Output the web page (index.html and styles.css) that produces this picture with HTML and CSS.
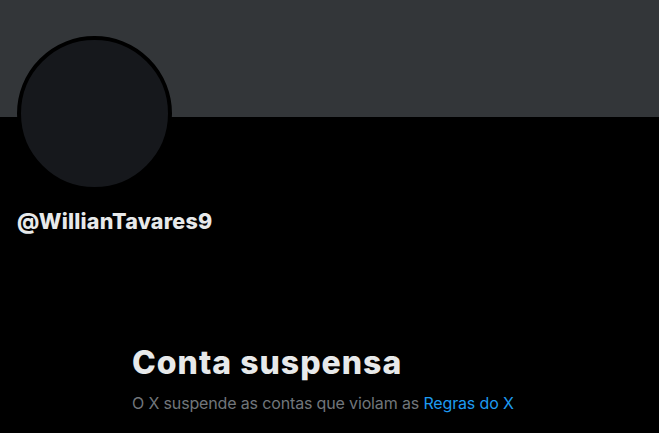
FILE: index.html
```html
<!DOCTYPE html>
<html lang="pt">
<head>
    <meta charset="UTF-8">
    <meta name="viewport" content="width=device-width, initial-scale=1.0">
    <title>Conta suspensa / X</title>
    <link rel="stylesheet" href="styles.css">
</head>
<body>
    <div class="profile">
        <div class="banner"></div>
        <div class="profile-head">
            <div class="avatar"></div>
        </div>
        <div class="handle">@WillianTavares9</div>

        <div class="suspended">
            <h1>Conta suspensa</h1>
            <p>O X suspende as contas que violam as <a href="#">Regras do X</a></p>
        </div>
    </div>
</body>
</html>
```

FILE: styles.css
```css
:root {
    --color-bg: #000000;
    --color-banner: #333639;
    --color-avatar: #16181c;
    --color-text: #e7e9ea;
    --color-muted: #71767b;
    --color-link: #1d9bf0;
}

body {
    margin: 0;
    background: var(--color-bg);
    color: var(--color-text);
    font-family: Inter, "Noto Sans", sans-serif;
    overflow: hidden;
}

.profile {
    width: 659px;
}

.banner {
    height: 117px;
    background: var(--color-banner);
}

.profile-head {
    display: flex;
    padding-left: 17px;
    height: 74px;
}

.avatar {
    flex: none;
    width: 147px;
    height: 147px;
    margin-top: -81px;
    border: 4px solid var(--color-bg);
    border-radius: 50%;
    background: var(--color-avatar);
}

.handle {
    padding: 17px 17px 0;
    font-size: 21.5px;
    font-weight: 800;
    line-height: 26px;
    letter-spacing: 0.2px;
}

.suspended {
    padding: 110px 0 0 132px;
}

h1 {
    margin: 0;
    font-size: 32px;
    font-weight: 800;
    line-height: 38px;
    letter-spacing: 1px;
}

p {
    margin: 11px 0 0;
    font-size: 16px;
    line-height: 20px;
    letter-spacing: -0.15px;
    color: var(--color-muted);
}

a {
    color: var(--color-link);
    text-decoration: none;
}
```
